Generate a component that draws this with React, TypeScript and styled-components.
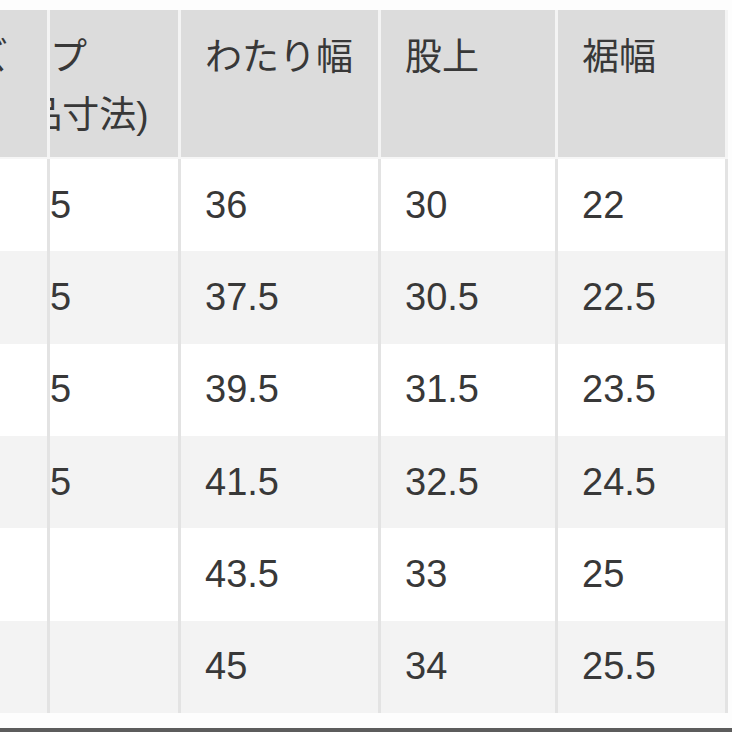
import React from "react";
import styled, { createGlobalStyle } from "styled-components";

const Global = createGlobalStyle`
  html, body { margin: 0; padding: 0; background: #ffffff; }
  * { box-sizing: border-box; }
`;

const COLS = "50px 131px 200px 177px 170px";

const Page = styled.div`
  width: 732px;
  height: 732px;
  overflow: hidden;
  background: #fdfdfd;
  padding-top: 10px;
  border-bottom: 4px solid #5c5c5c;
  font-family: "Liberation Sans", "Noto Sans CJK JP", sans-serif;
  color: #383838;
`;

const Table = styled.div`
  width: 728px;
  display: flex;
  flex-direction: column;
`;

const HeaderRow = styled.div`
  display: grid;
  grid-template-columns: ${COLS};
  height: 149px;
  border-bottom: 2px solid #f6f6f6;
`;

const BodyRow = styled.div<{ $alt: boolean }>`
  display: grid;
  grid-template-columns: ${COLS};
  height: 92.33px;
  background: ${(p) => (p.$alt ? "#f3f3f3" : "#ffffff")};
`;

const HeadCell = styled.div`
  background: #dcdcdc;
  border-right: 3px solid #f4f4f4;
  padding: 19px 0 0 24px;
  font-size: 37px;
  line-height: 58px;
  overflow: hidden;
  white-space: nowrap;
`;

const Cell = styled.div`
  border-right: 3px solid #e3e3e3;
  padding-left: 24px;
  display: flex;
  align-items: center;
  font-size: 38px;
  overflow: hidden;
  white-space: nowrap;
`;

const Shifted = styled.div<{ $shift: number }>`
  margin-left: ${(p) => p.$shift}px;
  flex-shrink: 0;
`;

const Line = styled.div``;

const rows: [string, string, string, string, string][] = [
  ["S", "100.5", "36", "30", "22"],
  ["M", "100.5", "37.5", "30.5", "22.5"],
  ["L", "100.5", "39.5", "31.5", "23.5"],
  ["XL", "100.5", "41.5", "32.5", "24.5"],
  ["XXL", "", "43.5", "33", "25"],
  ["3XL", "", "45", "34", "25.5"],
];

const SHIFT = [-126, -98, 0, 0, 0];

export default function App() {
  return (
    <>
      <Global />
      <Page>
        <Table>
          <HeaderRow>
            <HeadCell>
              <Shifted $shift={SHIFT[0]}>
                <Line>サイズ</Line>
              </Shifted>
            </HeadCell>
            <HeadCell>
              <Shifted $shift={SHIFT[1]}>
                <Line>ヒップ</Line>
                <Line>(製品寸法)</Line>
              </Shifted>
            </HeadCell>
            <HeadCell>わたり幅</HeadCell>
            <HeadCell>股上</HeadCell>
            <HeadCell>裾幅</HeadCell>
          </HeaderRow>
          {rows.map((r, i) => (
            <BodyRow key={i} $alt={i % 2 === 1}>
              {r.map((v, j) => (
                <Cell key={j}>
                  <Shifted $shift={SHIFT[j]}>{v}</Shifted>
                </Cell>
              ))}
            </BodyRow>
          ))}
        </Table>
      </Page>
    </>
  );
}
